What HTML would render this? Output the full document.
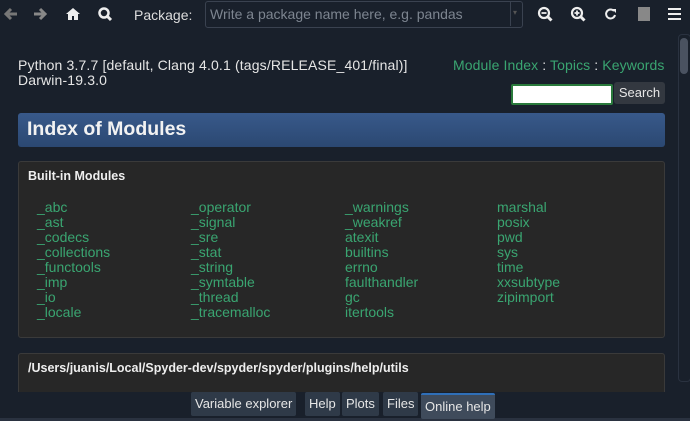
<!DOCTYPE html>
<html><head><style>
body{margin:0;width:690px;height:421px;background:#19202b;font-family:"Liberation Sans","DejaVu Sans",sans-serif;overflow:hidden;position:relative;color:#e6e6e6}
.a{position:absolute}
.tb{font-size:14px;color:#ddd}
.g{color:#3aa571}
.col{position:absolute;top:200px;font-size:14px;line-height:15px;color:#3aa571}
.tab{position:absolute;top:392px;height:24px;background:#2f3a48;color:#e6e6e6;font-size:13px;line-height:24px;padding:0 4px;border-radius:2px}
</style></head><body>
<svg class="a" style="left:4px;top:7px" width="14" height="14"><path d="M7 2L2 7l5 5M2 7h11" stroke="#777" stroke-width="3" fill="none"/></svg>
<svg class="a" style="left:33px;top:7px" width="14" height="14"><path d="M7 2l5 5-5 5M12 7H1" stroke="#888" stroke-width="3" fill="none"/></svg>
<svg class="a" style="left:65px;top:7px" width="16" height="14"><path d="M8 1L1 7h2v6h4v-4h2v4h4V7h2z" fill="#eee"/></svg>
<svg class="a" style="left:97px;top:6px" width="16" height="16"><circle cx="7" cy="7" r="4.5" stroke="#eee" stroke-width="2.5" fill="none"/><path d="M10 10l4 4" stroke="#eee" stroke-width="3"/></svg>
<div class="a tb" style="left:134px;top:7px">Package:</div>
<div class="a" style="left:205px;top:1px;width:316px;height:25px;border:1px solid #3a4250;border-radius:3px;background:#19202b"></div>
<div class="a" style="left:210px;top:6px;font-size:14px;color:#7d8590">Write a package name here, e.g. pandas</div>
<div class="a" style="left:510px;top:2px;width:1px;height:24px;background:#3a4250"></div>
<div class="a" style="left:513px;top:8px;font-size:8px;color:#555">▾</div>
<svg class="a" style="left:537px;top:6px" width="16" height="16"><circle cx="7" cy="7" r="5" stroke="#eee" stroke-width="2.2" fill="none"/><path d="M4.5 7h5" stroke="#eee" stroke-width="1.8"/><path d="M10.5 10.5l4 4" stroke="#eee" stroke-width="3"/></svg>
<svg class="a" style="left:570px;top:6px" width="16" height="16"><circle cx="7" cy="7" r="5" stroke="#eee" stroke-width="2.2" fill="none"/><path d="M4.5 7h5M7 4.5v5" stroke="#eee" stroke-width="1.8"/><path d="M10.5 10.5l4 4" stroke="#eee" stroke-width="3"/></svg>
<svg class="a" style="left:604px;top:7px" width="14" height="14"><path d="M10 4A4.5 4.5 0 1 0 11 8" stroke="#eee" stroke-width="2" fill="none"/><path d="M8 2h4v4z" fill="#eee"/></svg>
<div class="a" style="left:638px;top:7px;width:12px;height:14px;background:#888"></div>
<div class="a" style="left:668px;top:8px;width:13px;height:2px;background:#eee;box-shadow:0 5px 0 #eee,0 10px 0 #eee"></div>
<div class="a" style="left:18px;top:58px;font-size:14px;line-height:15px;color:#e6e6e6;letter-spacing:0.15px">Python 3.7.7 [default, Clang 4.0.1 (tags/RELEASE_401/final)]<br>Darwin-19.3.0</div>
<div class="a" style="left:453px;top:57px;font-size:14px;letter-spacing:0.1px"><span class="g">Module Index</span> : <span class="g">Topics</span> : <span class="g">Keywords</span></div>
<div class="a" style="left:511px;top:84px;width:98px;height:17px;background:#fff;border:2px solid #2a7a3c;border-radius:2px"></div>
<div class="a" style="left:614px;top:82px;width:51px;height:22px;background:#333840;border-radius:3px;font-size:13px;line-height:22px;text-align:center;color:#e6e6e6">Search</div>
<div class="a" style="left:680px;top:38px;width:8px;height:36px;background:#4a5260;border-radius:4px"></div>
<div class="a" style="left:678px;top:34px;width:11px;height:346px;border:1px solid #2a3240;border-radius:4px"></div>
<div class="a" style="left:18px;top:113px;width:647px;height:34px;background:linear-gradient(#38598a,#2b4872);border-radius:3px"></div>
<div class="a" style="left:27px;top:118px;font-size:19.5px;font-weight:bold;color:#f2f2f2">Index of Modules</div>
<div class="a" style="left:18px;top:161px;width:645px;height:175px;background:#272727;border:1px solid #3a3a3a;border-radius:3px"></div>
<div class="a" style="left:28px;top:169px;font-size:12.5px;font-weight:bold;color:#eee">Built-in Modules</div>
<div class="col" style="left:37px">_abc<br>_ast<br>_codecs<br>_collections<br>_functools<br>_imp<br>_io<br>_locale</div>
<div class="col" style="left:191px">_operator<br>_signal<br>_sre<br>_stat<br>_string<br>_symtable<br>_thread<br>_tracemalloc</div>
<div class="col" style="left:345px">_warnings<br>_weakref<br>atexit<br>builtins<br>errno<br>faulthandler<br>gc<br>itertools</div>
<div class="col" style="left:497px">marshal<br>posix<br>pwd<br>sys<br>time<br>xxsubtype<br>zipimport</div>
<div class="a" style="left:18px;top:353px;width:645px;height:50px;background:#272727;border:1px solid #3a3a3a;border-radius:3px"></div>
<div class="a" style="left:28px;top:361px;font-size:12.5px;font-weight:bold;color:#eee">/Users/juanis/Local/Spyder-dev/spyder/spyder/plugins/help/utils</div>
<div class="a" style="left:0;top:392px;width:690px;height:29px;background:#19202b"></div>
<div class="a" style="left:0;top:418px;width:690px;height:3px;background:#2a3240"></div>
<div class="tab" style="left:191px">Variable explorer</div>
<div class="tab" style="left:305px">Help</div>
<div class="tab" style="left:342px">Plots</div>
<div class="tab" style="left:383px">Files</div>
<div class="tab" style="left:421px;top:393px;background:#3f4b5b;border-top:2px solid #2f6fb8;height:24px">Online help</div>
</body></html>
